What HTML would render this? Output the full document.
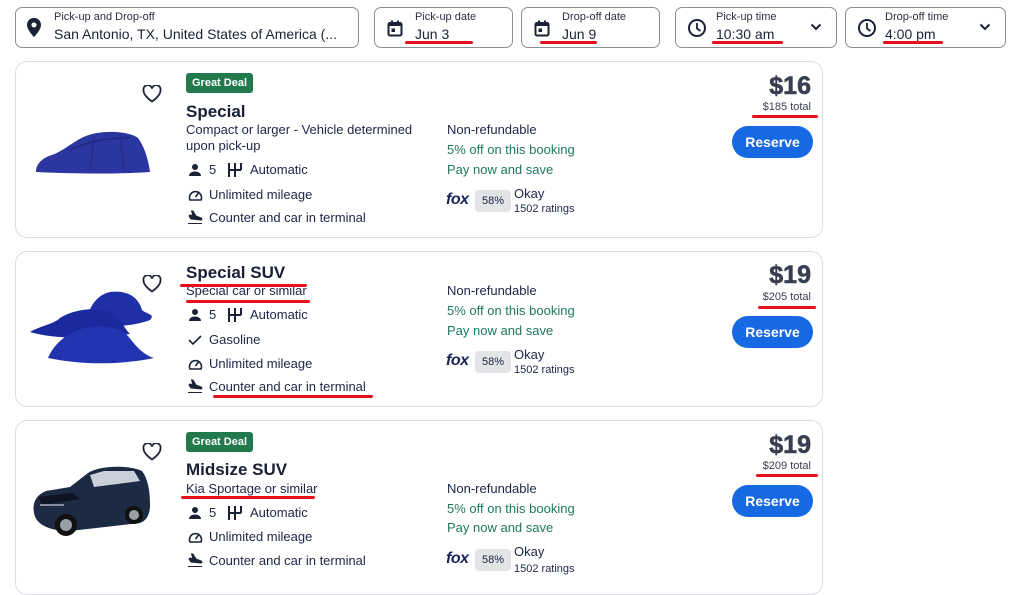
<!DOCTYPE html>
<html><head><meta charset="utf-8"><style>
*{margin:0;padding:0;box-sizing:border-box}
body{width:1009px;height:579px;overflow:hidden;background:#fff;font-family:"Liberation Sans",Arial,sans-serif;color:#1b2236;position:relative}
.a{position:absolute}
.box{position:absolute;top:7px;height:41px;border:1px solid #8a8e99;border-radius:7px;background:#fff}
.lbl{position:absolute;top:3px;font-size:11px;color:#2b3040;white-space:nowrap}
.val{position:absolute;top:18px;font-size:14px;color:#1b2236;white-space:nowrap}
.card{position:absolute;left:15px;width:808px;border:1px solid #dcdde2;border-radius:12px;background:#fff}
.t{position:absolute;white-space:nowrap;font-size:13px;line-height:18px;color:#1e2547}
.ttl{font-size:17px;font-weight:bold;line-height:22px;color:#1a1f36}
.g{color:#1f7a5a}
.badge{position:absolute;left:170px;width:67px;height:20px;background:#227a4c;color:#fff;border-radius:3px;font-size:11px;font-weight:bold;line-height:20px;text-align:center}
.price{position:absolute;right:11px;font-size:25px;font-weight:900;color:#3a3e50;line-height:26px;-webkit-text-stroke:0.6px #3a3e50}
.tot{position:absolute;right:11px;font-size:11px;color:#3a3e50;line-height:14px}
.res{position:absolute;left:716px;width:81px;height:32px;background:#1668e3;border-radius:16px;color:#fff;font-weight:bold;font-size:14px;line-height:32px;text-align:center}
.pct{position:absolute;left:459px;width:36px;height:22px;background:#e3e4e8;border-radius:4px;font-size:11px;line-height:22px;text-align:center;color:#1b2236}
.fox{position:absolute;left:430px;font-style:italic;font-weight:bold;font-size:16px;color:#1a2459;letter-spacing:-0.5px}
.ul{position:absolute;height:3px;background:#e8101a;border-radius:2px}
svg{position:absolute}
</style></head><body>

<div class="box" style="left:15px;width:344px">
<svg style="left:10px;top:10px" width="16" height="20" viewBox="0 0 16 20"><path d="M8 0C3.8 0 1 3 1 7c0 5 7 12 7 12s7-7 7-12c0-4-2.8-7-7-7zm0 9.5A2.5 2.5 0 1 1 8 4.5a2.5 2.5 0 0 1 0 5z" fill="#1b2236"/></svg>
<div class="lbl" style="left:38px">Pick-up and Drop-off</div>
<div class="val" style="left:38px">San Antonio, TX, United States of America (...</div></div>
<div class="box" style="left:374px;width:139px">
<svg style="left:12px;top:12px" width="16" height="17" viewBox="0 0 16 17"><rect x="1.5" y="3" width="13" height="12.5" rx="1.5" fill="none" stroke="#1b2236" stroke-width="2"/><rect x="1.5" y="3" width="13" height="3" fill="#1b2236"/><rect x="4" y="0.5" width="2" height="3" fill="#1b2236"/><rect x="10" y="0.5" width="2" height="3" fill="#1b2236"/><rect x="4.5" y="8.5" width="3.5" height="3.5" fill="#1b2236"/></svg>
<div class="lbl" style="left:40px">Pick-up date</div><div class="val" style="left:40px">Jun 3</div></div>
<div class="box" style="left:521px;width:139px">
<svg style="left:12px;top:12px" width="16" height="17" viewBox="0 0 16 17"><rect x="1.5" y="3" width="13" height="12.5" rx="1.5" fill="none" stroke="#1b2236" stroke-width="2"/><rect x="1.5" y="3" width="13" height="3" fill="#1b2236"/><rect x="4" y="0.5" width="2" height="3" fill="#1b2236"/><rect x="10" y="0.5" width="2" height="3" fill="#1b2236"/><rect x="4.5" y="8.5" width="3.5" height="3.5" fill="#1b2236"/></svg>
<div class="lbl" style="left:40px">Drop-off date</div><div class="val" style="left:40px">Jun 9</div></div>
<div class="box" style="left:675px;width:162px">
<svg style="left:11px;top:10px" width="20" height="20" viewBox="0 0 20 20"><circle cx="10" cy="10" r="8" fill="none" stroke="#1b2236" stroke-width="2"/><path d="M10 5v5.5l3.5 2.5" fill="none" stroke="#1b2236" stroke-width="1.8"/></svg>
<div class="lbl" style="left:40px">Pick-up time</div><div class="val" style="left:40px">10:30 am</div>
<svg style="left:134px;top:15px" width="12" height="8" viewBox="0 0 12 8"><path d="M1.5 1.5l4.5 4.5 4.5-4.5" fill="none" stroke="#1b2236" stroke-width="2"/></svg></div>
<div class="box" style="left:845px;width:161px">
<svg style="left:11px;top:10px" width="20" height="20" viewBox="0 0 20 20"><circle cx="10" cy="10" r="8" fill="none" stroke="#1b2236" stroke-width="2"/><path d="M10 5v5.5l3.5 2.5" fill="none" stroke="#1b2236" stroke-width="1.8"/></svg>
<div class="lbl" style="left:39px">Drop-off time</div><div class="val" style="left:39px">4:00 pm</div>
<svg style="left:133px;top:15px" width="12" height="8" viewBox="0 0 12 8"><path d="M1.5 1.5l4.5 4.5 4.5-4.5" fill="none" stroke="#1b2236" stroke-width="2"/></svg></div>

<!-- CARD 1 -->
<div class="card" style="top:61px;height:177px">
<svg style="left:18px;top:60px" width="120" height="56" viewBox="0 0 120 56"><path d="M2 50C2 42 8 36 18 33 32 28 42 16 58 12 76 8 96 10 104 16 110 24 114 36 116 50 90 52 40 52 2 50z" fill="#2c36a0"/><path d="M36 28C52 20 72 16 96 16" stroke="#1f2a85" stroke-width="2" fill="none"/><path d="M60 14L56 48M86 12L90 48" stroke="#232d8a" stroke-width="1.5" fill="none"/></svg>
<svg style="left:126px;top:23px" width="20" height="18" viewBox="0 0 20 18"><path d="M10 16.5S1.5 11 1.5 5.5A4 4 0 0 1 10 3.5a4 4 0 0 1 8.5 2C18.5 11 10 16.5 10 16.5z" fill="none" stroke="#1b2236" stroke-width="1.8"/></svg>
<div class="badge" style="top:11px">Great Deal</div>
<div class="t ttl" style="left:170px;top:39px">Special</div>
<div class="t" style="left:170px;top:59px">Compact or larger - Vehicle determined</div>
<div class="t" style="left:170px;top:75px">upon pick-up</div>
<svg style="left:172px;top:101px" width="14" height="14" viewBox="0 0 14 14"><circle cx="7" cy="4" r="3" fill="#1b2236"/><path d="M1 13c0-3 3-4.5 6-4.5s6 1.5 6 4.5z" fill="#1b2236"/></svg>
<div class="t" style="left:193px;top:99px">5</div>
<svg style="left:211px;top:100px" width="16" height="16" viewBox="0 0 16 16"><path d="M2 1v14M2 8h12M8 1v14M14 1v7" stroke="#1b2236" stroke-width="2" fill="none"/></svg>
<div class="t" style="left:234px;top:99px">Automatic</div>
<svg style="left:172px;top:126px" width="15" height="14" viewBox="0 0 15 14"><path d="M2 12a6 6 0 1 1 11 0z" fill="none" stroke="#1b2236" stroke-width="1.6"/><path d="M7.5 9l3-4" stroke="#1b2236" stroke-width="1.6"/></svg>
<div class="t" style="left:193px;top:124px">Unlimited mileage</div>
<svg style="left:171px;top:148px" width="16" height="15" viewBox="0 0 16 15"><path d="M1 13.5h14M2 6l2 3 10 1c1 0 1.5-1.5 0-2L9 6 6 1H4.5l1.5 4.5L3 5z" fill="#1b2236" stroke="#1b2236" stroke-width="1"/></svg>
<div class="t" style="left:193px;top:147px">Counter and car in terminal</div>
<div class="t" style="left:431px;top:59px">Non-refundable</div>
<div class="t g" style="left:431px;top:79px">5% off on this booking</div>
<div class="t g" style="left:431px;top:99px">Pay now and save</div>
<div class="fox" style="top:129px">fox</div>
<div class="pct" style="top:128px">58%</div>
<div class="t" style="left:498px;top:123px">Okay</div>
<div class="t" style="left:498px;top:140px;font-size:11px;line-height:14px">1502 ratings</div>
<div class="price" style="top:11px">$16</div>
<div class="tot" style="top:38px">$185 total</div>
<div class="res" style="top:64px">Reserve</div>
</div>

<!-- CARD 2 -->
<div class="card" style="top:251px;height:156px">
<svg style="left:10px;top:36px" width="130" height="82" viewBox="0 0 130 82"><path d="M58 38C62 26 66 8 84 4 100 2 112 8 116 22 120 26 130 26 124 32 110 38 80 40 58 38z" fill="#1f2fa5"/><path d="M4 44C14 38 28 36 34 30 46 22 70 18 84 24 96 32 98 40 104 46 70 50 30 52 4 44z" fill="#1a2a9c"/><path d="M22 70C26 60 36 48 52 42 70 36 92 38 102 48 110 58 116 66 128 70 100 76 60 78 22 70z" fill="#2234b0"/></svg>
<svg style="left:126px;top:23px" width="20" height="18" viewBox="0 0 20 18"><path d="M10 16.5S1.5 11 1.5 5.5A4 4 0 0 1 10 3.5a4 4 0 0 1 8.5 2C18.5 11 10 16.5 10 16.5z" fill="none" stroke="#1b2236" stroke-width="1.8"/></svg>
<div class="t ttl" style="left:170px;top:10px">Special SUV</div>
<div class="t" style="left:170px;top:30px">Special car or similar</div>
<svg style="left:172px;top:56px" width="14" height="14" viewBox="0 0 14 14"><circle cx="7" cy="4" r="3" fill="#1b2236"/><path d="M1 13c0-3 3-4.5 6-4.5s6 1.5 6 4.5z" fill="#1b2236"/></svg>
<div class="t" style="left:193px;top:54px">5</div>
<svg style="left:211px;top:55px" width="16" height="16" viewBox="0 0 16 16"><path d="M2 1v14M2 8h12M8 1v14M14 1v7" stroke="#1b2236" stroke-width="2" fill="none"/></svg>
<div class="t" style="left:234px;top:54px">Automatic</div>
<svg style="left:172px;top:82px" width="14" height="12" viewBox="0 0 14 12"><path d="M1 6l4 4 8-8" fill="none" stroke="#1b2236" stroke-width="1.6"/></svg>
<div class="t" style="left:193px;top:79px">Gasoline</div>
<svg style="left:172px;top:105px" width="15" height="14" viewBox="0 0 15 14"><path d="M2 12a6 6 0 1 1 11 0z" fill="none" stroke="#1b2236" stroke-width="1.6"/><path d="M7.5 9l3-4" stroke="#1b2236" stroke-width="1.6"/></svg>
<div class="t" style="left:193px;top:103px">Unlimited mileage</div>
<svg style="left:171px;top:127px" width="16" height="15" viewBox="0 0 16 15"><path d="M1 13.5h14M2 6l2 3 10 1c1 0 1.5-1.5 0-2L9 6 6 1H4.5l1.5 4.5L3 5z" fill="#1b2236" stroke="#1b2236" stroke-width="1"/></svg>
<div class="t" style="left:193px;top:126px">Counter and car in terminal</div>
<div class="t" style="left:431px;top:30px">Non-refundable</div>
<div class="t g" style="left:431px;top:50px">5% off on this booking</div>
<div class="t g" style="left:431px;top:70px">Pay now and save</div>
<div class="fox" style="top:100px">fox</div>
<div class="pct" style="top:99px">58%</div>
<div class="t" style="left:498px;top:94px">Okay</div>
<div class="t" style="left:498px;top:111px;font-size:11px;line-height:14px">1502 ratings</div>
<div class="price" style="top:10px">$19</div>
<div class="tot" style="top:38px">$205 total</div>
<div class="res" style="top:64px">Reserve</div>
</div>

<!-- CARD 3 -->
<div class="card" style="top:420px;height:175px">
<svg style="left:14px;top:40px" width="122" height="78" viewBox="0 0 122 78"><path d="M4 52C2 42 6 34 16 30L40 26 58 12C70 4 100 4 112 10 118 18 120 30 120 44 120 54 116 60 110 62L40 70C20 70 6 64 4 52z" fill="#1c2a44"/><path d="M60 14l14-4h30l6 10-46 6z" fill="#c9d0da"/><path d="M8 36l34-4 8 6-38 6z" fill="#0e1422"/><circle cx="36" cy="64" r="11" fill="#111"/><circle cx="36" cy="64" r="6" fill="#9aa0a8"/><circle cx="104" cy="54" r="9" fill="#111"/><circle cx="104" cy="54" r="5" fill="#9aa0a8"/><path d="M10 44h24" stroke="#aab" stroke-width="1.5"/></svg>
<svg style="left:126px;top:22px" width="20" height="18" viewBox="0 0 20 18"><path d="M10 16.5S1.5 11 1.5 5.5A4 4 0 0 1 10 3.5a4 4 0 0 1 8.5 2C18.5 11 10 16.5 10 16.5z" fill="none" stroke="#1b2236" stroke-width="1.8"/></svg>
<div class="badge" style="top:11px">Great Deal</div>
<div class="t ttl" style="left:170px;top:38px">Midsize SUV</div>
<div class="t" style="left:170px;top:59px">Kia Sportage or similar</div>
<svg style="left:172px;top:85px" width="14" height="14" viewBox="0 0 14 14"><circle cx="7" cy="4" r="3" fill="#1b2236"/><path d="M1 13c0-3 3-4.5 6-4.5s6 1.5 6 4.5z" fill="#1b2236"/></svg>
<div class="t" style="left:193px;top:83px">5</div>
<svg style="left:211px;top:84px" width="16" height="16" viewBox="0 0 16 16"><path d="M2 1v14M2 8h12M8 1v14M14 1v7" stroke="#1b2236" stroke-width="2" fill="none"/></svg>
<div class="t" style="left:234px;top:83px">Automatic</div>
<svg style="left:172px;top:109px" width="15" height="14" viewBox="0 0 15 14"><path d="M2 12a6 6 0 1 1 11 0z" fill="none" stroke="#1b2236" stroke-width="1.6"/><path d="M7.5 9l3-4" stroke="#1b2236" stroke-width="1.6"/></svg>
<div class="t" style="left:193px;top:107px">Unlimited mileage</div>
<svg style="left:171px;top:132px" width="16" height="15" viewBox="0 0 16 15"><path d="M1 13.5h14M2 6l2 3 10 1c1 0 1.5-1.5 0-2L9 6 6 1H4.5l1.5 4.5L3 5z" fill="#1b2236" stroke="#1b2236" stroke-width="1"/></svg>
<div class="t" style="left:193px;top:131px">Counter and car in terminal</div>
<div class="t" style="left:431px;top:59px">Non-refundable</div>
<div class="t g" style="left:431px;top:79px">5% off on this booking</div>
<div class="t g" style="left:431px;top:98px">Pay now and save</div>
<div class="fox" style="top:129px">fox</div>
<div class="pct" style="top:128px">58%</div>
<div class="t" style="left:498px;top:122px">Okay</div>
<div class="t" style="left:498px;top:141px;font-size:11px;line-height:14px">1502 ratings</div>
<div class="price" style="top:11px">$19</div>
<div class="tot" style="top:38px">$209 total</div>
<div class="res" style="top:64px">Reserve</div>
</div>

<div class="ul" style="left:405px;top:41px;width:68px"></div>
<div class="ul" style="left:540px;top:41px;width:57px"></div>
<div class="ul" style="left:712px;top:41px;width:71px"></div>
<div class="ul" style="left:883px;top:41px;width:60px"></div>
<div class="ul" style="left:752px;top:115px;width:66px"></div>
<div class="ul" style="left:180px;top:284px;width:127px"></div>
<div class="ul" style="left:186px;top:300px;width:124px"></div>
<div class="ul" style="left:213px;top:395px;width:160px"></div>
<div class="ul" style="left:758px;top:306px;width:58px"></div>
<div class="ul" style="left:181px;top:496px;width:134px"></div>
<div class="ul" style="left:756px;top:474px;width:62px"></div>
</body></html>
